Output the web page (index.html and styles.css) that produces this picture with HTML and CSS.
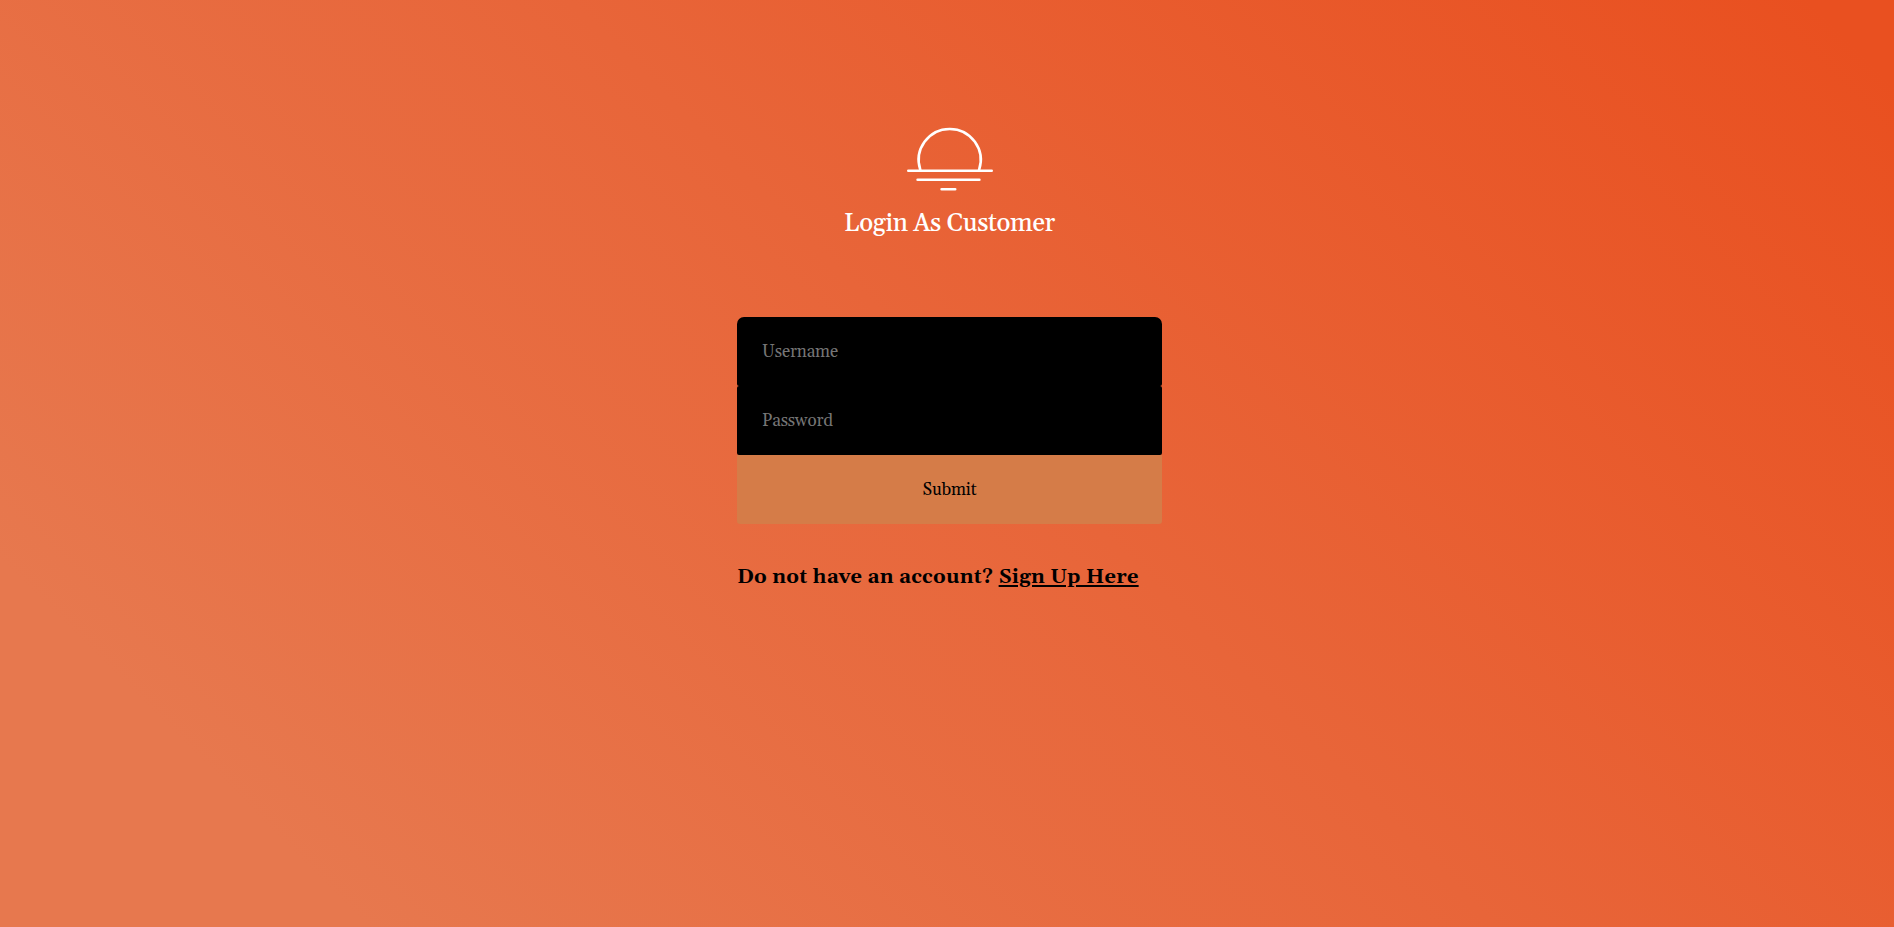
FILE: index.html
```html
<!DOCTYPE html>
<html lang="en">
<head>
<meta charset="utf-8">
<title>Login As Customer</title>
<link rel="stylesheet" href="styles.css">
</head>
<body>
<main class="login">
  <header class="brand">
    <svg class="sun" viewBox="0 0 88 66" aria-hidden="true">
      <path d="M14.3 42.8A31 31 0 1 1 73.1 42.8"/>
      <path d="M2.3 43.8H85.7M11.6 52.7H73.4M35.6 62.3H49.2"/>
    </svg>
    <h1 class="title">Login As Customer</h1>
  </header>
  <form class="form">
    <input class="field first" type="text" placeholder="Username">
    <input class="field" type="password" placeholder="Password">
    <button class="submit" type="button">Submit</button>
  </form>
  <h2 class="signup"><span class="question">Do not have an account?</span> <a class="link" href="#">Sign Up Here</a></h2>
</main>
</body>
</html>
```
FILE: styles.css
```css
* { box-sizing: border-box; }
body {
  margin: 0;
  padding-left: 5px;
  min-height: 100vh;
  background: linear-gradient(45deg, #e7784e 13%, #e86539 53%, #e95020 97%);
  font-family: Gelasio, Georgia, "Liberation Serif", serif;
}
.login {
  width: 425px;
  margin: 0 auto;
  padding-top: 127px;
}
.brand {
  display: flex;
  flex-direction: column;
  align-items: center;
  height: 190px;
}
.sun {
  width: 88px;
  height: 66px;
  fill: none;
  stroke: #fff;
  stroke-width: 2.6;
  stroke-linecap: round;
}
.title {
  margin: 16px 0 0;
  font-size: 25px;
  line-height: 30px;
  font-weight: 500;
  letter-spacing: -0.36px;
  color: #fff;
  white-space: nowrap;
}
.form { display: flex; flex-direction: column; }
.field, .submit {
  height: 69px;
  border: 0;
  padding: 1px 25px 0;
  font-family: inherit;
  font-size: 17px;
  letter-spacing: -0.15px;
}
.field { background: #000; color: #fff; border-radius: 2px; outline: none; }
.field::placeholder { color: #757575; }
.first { border-radius: 7px 7px 2px 2px; }
.submit { background: #d57c48; color: #000; border-radius: 0 0 3px 3px; }
.signup {
  margin: 37px 0 0;
  font-size: 20px;
  line-height: 32px;
  font-weight: 700;
  letter-spacing: 0.26px;
  white-space: nowrap;
}
.link { color: inherit; text-decoration-thickness: 2px; text-underline-offset: 2px; }
```
